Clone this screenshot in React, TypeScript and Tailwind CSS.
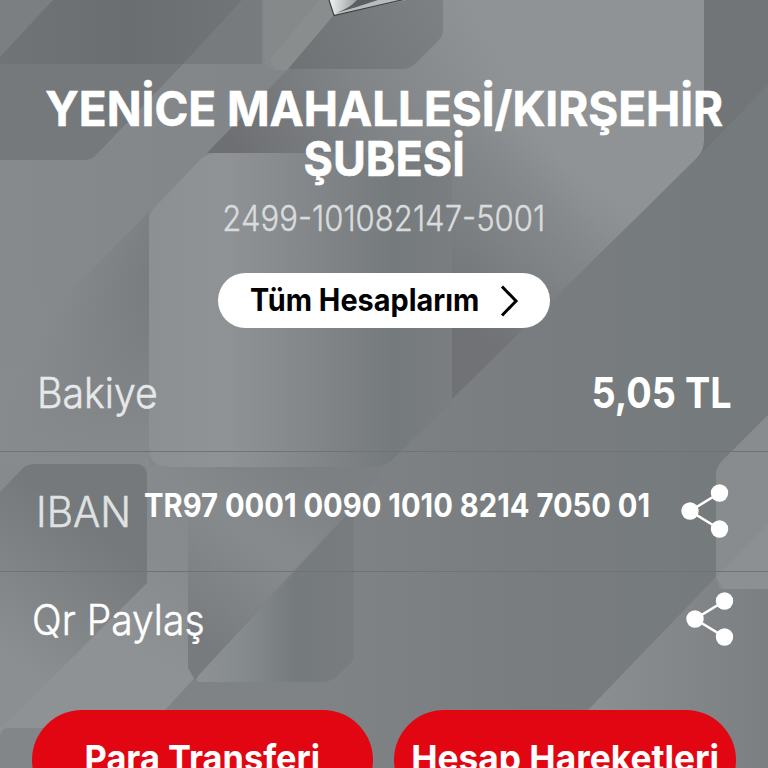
import React from "react";

interface RowProps {
  children: React.ReactNode;
  className?: string;
}

// 3D logo tip + geometric background
function Background() {
  return (
    <svg
      className="absolute inset-0"
      width={768}
      height={768}
      viewBox="0 0 768 768"
      fill="none"
    >
      <defs>
        <linearGradient id="base" x1="0" y1="0" x2="1" y2="0">
          <stop offset="0" stopColor="#868a8c" />
          <stop offset="0.4" stopColor="#818587" />
          <stop offset="0.65" stopColor="#787c7e" />
          <stop offset="1" stopColor="#727678" />
        </linearGradient>
        <linearGradient id="corner" x1="0" y1="0" x2="1" y2="0">
          <stop offset="0" stopColor="#707476" />
          <stop offset="0.5" stopColor="#6a6e70" />
          <stop offset="1" stopColor="#727678" />
        </linearGradient>
        <linearGradient id="wide" gradientUnits="userSpaceOnUse" x1="240" y1="160" x2="480" y2="20">
          <stop offset="0" stopColor="#6d6f72" />
          <stop offset="0.5" stopColor="#828587" />
          <stop offset="1" stopColor="#8f9395" />
        </linearGradient>
        <linearGradient id="wideFade" gradientUnits="userSpaceOnUse" x1="575" y1="170" x2="465" y2="325">
          <stop offset="0" stopColor="#777b7d" stopOpacity="0" />
          <stop offset="0.5" stopColor="#797d7f" stopOpacity="0.6" />
          <stop offset="1" stopColor="#707275" />
        </linearGradient>
        <linearGradient id="card" gradientUnits="userSpaceOnUse" x1="149" y1="0" x2="452" y2="0">
          <stop offset="0" stopColor="#8c9092" />
          <stop offset="0.25" stopColor="#8f9395" />
          <stop offset="0.55" stopColor="#838688" />
          <stop offset="0.8" stopColor="#757a7c" />
          <stop offset="1" stopColor="#7a7e80" />
        </linearGradient>
        <linearGradient id="side" gradientUnits="userSpaceOnUse" x1="65" y1="285" x2="149" y2="325">
          <stop offset="0" stopColor="#76797b" stopOpacity="0" />
          <stop offset="1" stopColor="#76797b" />
        </linearGradient>
        <linearGradient id="sideDown" gradientUnits="userSpaceOnUse" x1="0" y1="270" x2="0" y2="466">
          <stop offset="0" stopColor="#878b8d" stopOpacity="0" />
          <stop offset="1" stopColor="#878b8d" />
        </linearGradient>
        <linearGradient id="tile" gradientUnits="userSpaceOnUse" x1="300" y1="69" x2="430" y2="0">
          <stop offset="0" stopColor="#6f7375" />
          <stop offset="1" stopColor="#7c8082" />
        </linearGradient>
        <linearGradient id="hex" gradientUnits="userSpaceOnUse" x1="110" y1="540" x2="20" y2="665">
          <stop offset="0" stopColor="#75797b" />
          <stop offset="1" stopColor="#8b8f91" />
        </linearGradient>
        <linearGradient id="band" gradientUnits="userSpaceOnUse" x1="300" y1="470" x2="180" y2="680">
          <stop offset="0" stopColor="#7d8082" />
          <stop offset="0.3" stopColor="#878a8c" />
          <stop offset="0.6" stopColor="#878b8d" />
          <stop offset="1" stopColor="#8e9294" />
        </linearGradient>
        <linearGradient id="shade" gradientUnits="userSpaceOnUse" x1="200" y1="640" x2="265" y2="550">
          <stop offset="0" stopColor="#777b7d" />
          <stop offset="1" stopColor="#777b7d" stopOpacity="0" />
        </linearGradient>
        <linearGradient id="lower" gradientUnits="userSpaceOnUse" x1="200" y1="0" x2="354" y2="0">
          <stop offset="0" stopColor="#8d9193" />
          <stop offset="0.3" stopColor="#858a8c" />
          <stop offset="0.62" stopColor="#757a7c" />
          <stop offset="1" stopColor="#787c7e" />
        </linearGradient>
        <linearGradient id="floor" gradientUnits="userSpaceOnUse" x1="330" y1="0" x2="716" y2="0">
          <stop offset="0" stopColor="#7f8385" />
          <stop offset="0.5" stopColor="#797d7f" />
          <stop offset="1" stopColor="#757a7c" />
        </linearGradient>
        <linearGradient id="edge" gradientUnits="userSpaceOnUse" x1="600" y1="0" x2="768" y2="0">
          <stop offset="0" stopColor="#8a8e90" />
          <stop offset="1" stopColor="#7b7f81" />
        </linearGradient>
        <linearGradient id="metal" gradientUnits="userSpaceOnUse" x1="332" y1="2" x2="372" y2="4">
          <stop offset="0" stopColor="#e9eaea" />
          <stop offset="0.4" stopColor="#b5b8b9" />
          <stop offset="1" stopColor="#6a6d6f" />
        </linearGradient>
      </defs>

      <rect width="768" height="768" fill="url(#base)" />

      {/* upper left */}
      <path d="M0 0H262V64H0Z" fill="url(#corner)" />
      <path d="M0 0H53L0 57Z" fill="#7b7f81" />
      <path d="M242 0H262V64H183Z" fill="#777b7d" />
      <path d="M0 64H183L97 154Q92 160 82 160H0Z" fill="#75797b" />

      {/* upper centre and right */}
      <path
        d="M288 69L207 153H400L452 402L697 158Q704 151 704 141V0H440Z"
        fill="url(#wide)"
      />
      <path d="M452 84V402L697 158Q704 151 704 141V84Z" fill="url(#wideFade)" />
      <path d="M704 0H768V85L697 158Q704 151 704 141Z" fill="#717577" />
      <path d="M264 0H345L288 70H274Q264 68 264 57Z" fill="#858989" />
      <path d="M319 0H332L334 15L288 70H275L270 60Z" fill="#8e9294" opacity="0.5" />
      <path d="M334 15L350 0H443V30Q443 36 438 41L416 63Q410 69 402 69H288Z" fill="url(#tile)" />

      {/* left side and middle card */}
      <path d="M149 212L0 361V466H149Z" fill="url(#side)" />
      <path d="M0 270H149V466H0Z" fill="url(#sideDown)" />
      <path d="M149 466H384L697 158L768 85V768H0V690L147 583Z" fill="url(#floor)" />
      <path
        d="M149 222Q149 213 156 206L199 161Q207 153 216 153H440Q452 153 452 165V402L392 460Q384 467 374 467H169Q149 467 149 447Z"
        fill="url(#card)"
      />

      {/* lower half */}
      <path
        d="M145 466H165Q168 467 172 467H374Q384 467 390 462L354 505L165 710L107 768H0V690L145 583Z"
        fill="url(#band)"
      />
      <path d="M188 515H345L354 505L195 680L188 668Z" fill="url(#shade)" />
      <path
        d="M354 507V655Q354 660 350 664L336 677Q330 682 322 682H200Q194 682 198 676Z"
        fill="url(#lower)"
      />
      <path
        d="M0 492L23 468Q28 464 34 464H135Q147 464 147 476V583L10 720L0 728Z"
        fill="url(#hex)"
      />
      <path d="M8 728H60V768H0V736Q2 728 8 728Z" fill="#828688" />

      {/* right edge */}
      <path d="M768 415L722 461Q716 467 716 476V577L588 710V768H768Z" fill="url(#edge)" />
      <path d="M768 415L722 461Q716 467 716 476V577L724 589H768Z" fill="#888c8e" />
      <path d="M768 524L716 577L720 589H768Z" fill="#8f9395" opacity="0.5" />

      {/* logo tip */}
      <path d="M329 0L334 15.5L406 0Z" fill="#b9bcbd" />
      <path d="M329 0L334 15L366 0Z" fill="url(#metal)" />
      <path d="M336 13Q350 8 357 0H378Q358 7 336 13Z" fill="#5c5f61" />
      <path d="M329 0L334 15.5L406 -1" stroke="#3d4042" strokeWidth="1.2" />
    </svg>
  );
}

function ShareIcon() {
  return (
    <svg width={48} height={54} viewBox="0 0 48 54" fill="white">
      <path d="M38.5 9L9 27L38.5 45" stroke="white" strokeWidth="2.6" fill="none" />
      <circle cx="9" cy="27" r="8.7" />
      <circle cx="38.5" cy="9" r="8.7" />
      <circle cx="38.5" cy="45" r="8.7" />
    </svg>
  );
}

function Row({ children, className = "" }: RowProps) {
  return <div className={`flex items-start ${className}`}>{children}</div>;
}

export default function App() {
  return (
    <div className="relative h-[768px] w-[768px] overflow-hidden bg-[#7c8082] font-['Inter','Liberation_Sans',sans-serif] text-white">
      <Background />
      <div className="relative flex flex-col whitespace-nowrap">
        <div className="flex flex-col items-center pt-[84px]">
          <h1 className="flex flex-col items-center text-[48px] leading-[50px] font-bold [-webkit-text-stroke:0.6px_currentColor]">
            <span className="scale-x-[0.954]">YENİCE MAHALLESİ/KIRŞEHİR</span>
            <span className="scale-x-[0.935]">ŞUBESİ</span>
          </h1>
          <p className="mt-3.5 scale-x-[0.888] text-[35px] leading-10 font-light text-[#d9dcdd] [-webkit-text-stroke:0.4px_currentColor]">
            2499-101082147-5001
          </p>
          <button className="mt-[35px] flex h-[55px] w-[332px] items-center rounded-full bg-white pl-8 text-black">
            <span className="w-[250px] origin-left scale-x-[0.93] text-left text-[31px] font-bold">
              Tüm Hesaplarım
            </span>
            <svg width={20} height={34} viewBox="0 0 20 34" fill="none">
              <path d="M2 2.5L16 17L2 31.5" stroke="black" strokeWidth="3" />
            </svg>
          </button>
        </div>

        <Row className="mt-10 h-[84px] justify-between border-b border-[#6f7375] pr-9 pl-[37px]">
          <span className="origin-left scale-x-[0.935] text-[42px] leading-[50px] font-light text-[#e6e9ea] [-webkit-text-stroke:0.5px_currentColor]">
            Bakiye
          </span>
          <span className="origin-right scale-x-[0.9] text-[42px] leading-[50px] font-bold">
            5,05 TL
          </span>
        </Row>

        <Row className="h-[120px] border-b border-[#6f7375] pl-9">
          <span className="mt-[35px] w-[108px] origin-left scale-x-[0.965] text-[42px] leading-[50px] font-light text-[#dfe2e3] [-webkit-text-stroke:0.5px_currentColor]">
            IBAN
          </span>
          <span className="mt-[34px] w-[537px] origin-left scale-x-[0.912] text-[32px] leading-10 font-bold">
            TR97 0001 0090 1010 8214 7050 01
          </span>
          <span className="mt-8">
            <ShareIcon />
          </span>
        </Row>

        <Row className="h-[138px] justify-between pr-[34px] pl-8">
          <span className="mt-[23px] origin-left scale-x-[0.93] text-[42px] leading-[50px] font-light [-webkit-text-stroke:0.5px_currentColor]">
            Qr Paylaş
          </span>
          <span className="mt-5">
            <ShareIcon />
          </span>
        </Row>

        <div className="flex gap-[21px] pl-8 text-[36px] leading-10 font-bold">
          <button className="flex h-[100px] w-[341px] items-start justify-center rounded-[50px] bg-[#e20613] pt-7">
            <span className="scale-x-[0.955]">Para Transferi</span>
          </button>
          <button className="flex h-[100px] w-[342px] items-start justify-center rounded-[50px] bg-[#e20613] pt-7">
            <span className="scale-x-[0.98]">Hesap Hareketleri</span>
          </button>
        </div>
      </div>
    </div>
  );
}
